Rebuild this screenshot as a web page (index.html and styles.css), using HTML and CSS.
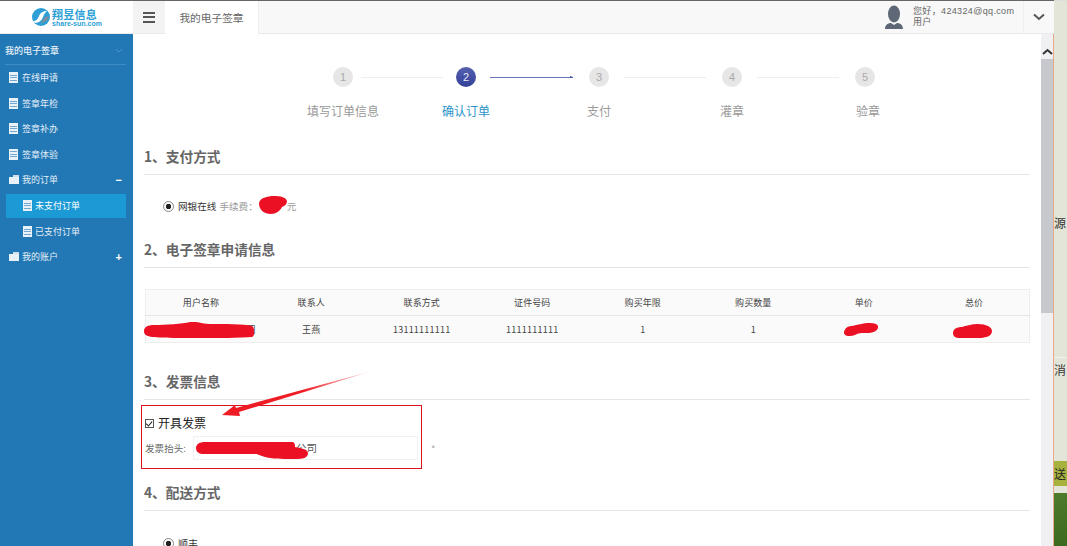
FILE: index.html
```html
<!DOCTYPE html>
<html lang="zh-CN">
<head>
<meta charset="utf-8">
<title>我的电子签章</title>
<link rel="stylesheet" href="styles.css">
</head>
<body>
<div class="screen">
  <div class="window">
    <header class="topbar">
      <div class="logo">
        <svg class="logo-mark" width="20" height="18" viewBox="0 0 20 18"><circle cx="10" cy="9" r="9" fill="#2c9fd6"/><path d="M2 13c3 0 5-2 6-5s4-5 8-5c-2 2-3 3-4 6s-4 6-8 6z" fill="#fff"/><path d="M9 15c2-1 3-3 4-5 1-1 3-2 5-2-1 4-4 7-9 7z" fill="#7d8f9c"/></svg>
        <div class="logo-text"><span class="logo-name">翔昱信息</span><span class="logo-url">share-sun.com</span></div>
      </div>
      <div class="burger"><i></i><i></i><i></i></div>
      <div class="tab">我的电子签章</div>
      <div class="user">
        <svg width="20" height="24" viewBox="0 0 20 24"><ellipse cx="10" cy="9" rx="6" ry="8.500" fill="#5d6776"/><path d="M1 24c0-4 3-6 6-6l3 2 3-2c3 0 6 2 6 6z" fill="#5d6776"/></svg>
        <div class="user-text"><span>您好，424324@qq.com</span><span>用户</span></div>
      </div>
      <div class="user-toggle"><svg width="12" height="8" viewBox="0 0 12 8"><path d="M1 1.500l5 4.500 5-4.500" fill="none" stroke="#555" stroke-width="2"/></svg></div>
    </header>
    <div class="body">
      <nav class="sidebar">
        <div class="side-title"><span>我的电子签章</span><svg width="8" height="5" viewBox="0 0 8 5"><path d="M1 1l3 3 3-3" fill="none" stroke="#4c95c9" stroke-width="1"/></svg></div>
        <a class="nav-item"><span class="ic-doc"></span>在线申请</a>
        <a class="nav-item"><span class="ic-doc"></span>签章年检</a>
        <a class="nav-item"><span class="ic-doc"></span>签章补办</a>
        <a class="nav-item"><span class="ic-doc"></span>签章体验</a>
        <a class="nav-item"><span class="ic-folder"></span>我的订单<b class="sign">−</b></a>
        <a class="nav-sub active"><span class="ic-doc"></span>未支付订单</a>
        <a class="nav-sub"><span class="ic-doc"></span>已支付订单</a>
        <a class="nav-item"><span class="ic-folder"></span>我的账户<b class="sign">+</b></a>
      </nav>
      <main class="main">
        <ol class="steps">
          <li class="step"><div class="track"><span class="dot">1</span><span class="conn"></span></div><span class="step-label">填写订单信息</span></li>
          <li class="step current"><div class="track"><span class="dot">2</span><span class="conn"></span></div><span class="step-label">确认订单</span></li>
          <li class="step"><div class="track"><span class="dot">3</span><span class="conn"></span></div><span class="step-label">支付</span></li>
          <li class="step"><div class="track"><span class="dot">4</span><span class="conn"></span></div><span class="step-label">灌章</span></li>
          <li class="step"><div class="track"><span class="dot">5</span></div><span class="step-label">验章</span></li>
        </ol>

        <h2 class="section first">1、支付方式</h2>
        <div class="pay"><span class="radio"></span><span class="pay-name">网银在线</span><span class="pay-fee">手续费：</span><span class="fee-gap"><svg class="scr scr-fee" viewBox="0 0 28 18"><path d="M0 7C1 2 8 0 15 0c6 0 12 1 13 5 0 3-2 5-5 6-2 4-6 7-11 7C5 18 0 14 0 7z" fill="#ec1024"/></svg></span><span class="pay-unit">元</span></div>

        <h2 class="section s2">2、电子签章申请信息</h2>
        <table class="order">
          <thead><tr><th>用户名称</th><th>联系人</th><th>联系方式</th><th>证件号码</th><th>购买年限</th><th>购买数量</th><th>单价</th><th>总价</th></tr></thead>
          <tbody><tr><td class="tail">司<svg class="scr scr-name" viewBox="0 0 110 16"><path d="M0 9c0-4 4-6 10-6 12 0 28-1 36-3 7-1 12 2 20 2 14 0 34 0 42 2 3 2 3 10 0 11-12 1-34 1-55 1C32 16 8 16 4 14 1 13 0 12 0 9z" fill="#ec1024"/></svg></td><td>王燕</td><td>13111111111</td><td>1111111111</td><td>1</td><td>1</td><td><svg class="scr scr-price" viewBox="0 0 34 13"><path d="M0 9c1-4 4-6 8-6 6-1 10-3 18-3 6 0 9 2 8 5-1 3-5 5-12 5-5 0-7 0-11 2-5 2-12 1-11-3z" fill="#ec1024"/></svg></td><td><svg class="scr scr-total" viewBox="0 0 39 14"><path d="M0 9c0-4 4-6 9-6 4-1 9-3 16-3 8 0 14 3 14 7 0 5-6 7-13 7H7C3 14 0 13 0 9z" fill="#ec1024"/></svg></td></tr></tbody>
        </table>

        <h2 class="section s3">3、发票信息</h2>
        <div class="invoice">
          <label class="check"><span class="box"></span>开具发票</label>
          <div class="inv-row"><span class="inv-label">发票抬头:</span><div class="inv-input"><span>公司</span><svg class="scr scr-inv" viewBox="0 0 112 17"><path d="M0 6c0-4 4-6 9-6l87 0c2 0 3 1 3 5 5 1 13 2 13 6 0 5-5 6-13 6-13 0-26 0-33-3-3-1-4-2-8-2H8C3 12 0 10 0 6z" fill="#ec1024"/></svg></div><span class="star">*</span></div>
          <svg class="arrow" viewBox="0 0 154 50"><defs><linearGradient id="fade" x1="0" y1="1" x2="1" y2="0"><stop offset="0.55" stop-color="#ee1c25"/><stop offset="1" stop-color="#ee1c25" stop-opacity=".1"/></linearGradient></defs><path d="M3 46L16 36l1 3L153 2 20 43l1 4z" fill="url(#fade)"/></svg>
        </div>

        <h2 class="section s4">4、配送方式</h2>
        <div class="ship"><span class="radio"></span><span class="ship-name">顺丰</span></div>
      </main>
      <div class="scrollbar">
        <svg class="sb-up" width="11" height="7" viewBox="0 0 11 7"><path d="M1 6l4.500-4 4.500 4" fill="none" stroke="#333" stroke-width="2"/></svg>
        <div class="sb-thumb"></div>
      </div>
    </div>
  </div>
  <aside class="strip">
    <span class="strip-t t1">源</span>
    <span class="strip-t t2">消</span>
    <span class="strip-t t3">送</span>
    <div class="strip-green"></div>
  </aside>
</div>
</body>
</html>
```
FILE: styles.css
```css
* { box-sizing: border-box; }
html, body { margin: 0; height: 100%; overflow: hidden; }
body { font-family: "Noto Sans CJK SC", "Liberation Sans", sans-serif; color: #444; background: #fff; }
.screen { display: flex; width: 1067px; height: 546px; overflow: hidden; }
.window { width: 1054px; flex: none; display: flex; flex-direction: column; border-top: 1px solid #666; }

.topbar { height: 33px; flex: none; display: flex; align-items: stretch; background: #f8f8f8; border-bottom: 1px solid #e9e9e9; }
.logo { width: 133px; flex: none; display: flex; align-items: center; justify-content: center; gap: 1px; background: #fff; }
.logo-text { display: flex; flex-direction: column; line-height: 1; }
.logo-name { font-size: 11px; font-weight: 700; color: #2c9fd6; letter-spacing: .2px; line-height: 12px; }
.logo-url { font-family: "Liberation Sans", sans-serif; font-size: 7px; font-weight: 700; color: #2c9fd6; line-height: 7px; }
.burger { width: 32px; flex: none; display: flex; flex-direction: column; justify-content: center; align-items: center; gap: 2.500px; background: #f3f3f3; }
.burger i { display: block; width: 12px; height: 2px; background: #555; }
.tab { width: 94px; flex: none; display: flex; align-items: center; justify-content: center; background: #fff; font-size: 10.700px; color: #666; border-right: 1px solid #eee; margin-bottom: -1px; }
.user { margin-left: auto; display: flex; align-items: center; gap: 9px; padding-right: 8px; }
.user-text { display: flex; flex-direction: column; font-family: "Liberation Sans", "Noto Sans CJK SC", sans-serif; font-size: 9px; line-height: 11px; color: #666; width: 102px; letter-spacing: .35px; }
.user-toggle { width: 31px; flex: none; display: flex; align-items: center; justify-content: center; border-left: 1px solid #eee; }

.body { flex: 1; display: flex; min-height: 0; }
.sidebar { width: 133px; flex: none; background: #2277b5; color: #e4eff7; padding-left: 5px; padding-right: 7px; font-size: 9px; }
.side-title { height: 31px; display: flex; align-items: center; justify-content: space-between; padding: 2px 3px 0 0; border-bottom: 1px solid #3e8cc4; font-weight: 500; }
.nav-item, .nav-sub { display: flex; align-items: center; height: 25.500px; }
.nav-item { padding-left: 4px; }
.nav-sub { margin-left: 1px; padding-left: 17px; }
.nav-sub.active { background: #1c9ad6; height: 24px; margin-top: 1px; margin-bottom: 1px; color: #fff; }
.ic-doc { width: 9px; height: 11px; background: repeating-linear-gradient(#eaf2f8 0 1.500px, #6fa8d2 1.500px 2.500px); border: 1px solid #eaf2f8; margin-right: 4px; flex: none; }
.nav-sub .ic-doc { margin-right: 3px; }
.ic-folder { position: relative; width: 10px; height: 7px; margin-top: 2px; background: #e8f1f8; margin-right: 3px; flex: none; }
.ic-folder::before { content: ""; position: absolute; right: 0; top: -2px; width: 6px; height: 2px; background: #cfe0ee; }
.sign { margin-left: auto; margin-right: 4px; color: #fff; font-size: 11px; font-family: "Liberation Sans", sans-serif; }

.main { flex: 1; min-width: 0; background: #fff; padding: 0 11px; overflow: hidden; }
.steps { list-style: none; margin: 33px 0 0 132.500px; padding: 0; display: flex; }
.step { width: 133px; min-width: 0; flex: none; display: flex; flex-direction: column; }
.step:first-child { margin-right: -10px; }
.track { display: flex; align-items: center; height: 20px; margin-left: 56.500px; width: 140px; }
.dot { width: 20px; height: 20px; flex: none; border-radius: 50%; background: #e6e6e6; color: #aaa; font-family: "Liberation Sans", sans-serif; font-size: 11px; display: flex; align-items: center; justify-content: center; }
.conn { width: 82px; flex: none; margin-left: 15px; height: 1px; background: #eeeeee; }
.step:first-child .conn { margin-left: 8px; }
.step-label { text-align: center; font-size: 12px; line-height: 16px; margin-top: 16px; color: #999; width: 133px; }
.step:last-child .step-label { padding-left: 6px; }
.current .dot { background: linear-gradient(#5560ad, #33419a); color: #e6e9f7; }
.current .conn { background: #6873b5; margin-left: 14px; position: relative; width: 83px; }
.current .conn::after { content: ""; position: absolute; right: 0; top: -1px; border-left: 3px solid #3b4a9d; border-top: 1.500px solid transparent; border-bottom: 1.500px solid transparent; }
.current .step-label { color: #2b93c8; }

.section { margin: 0; font-size: 13.700px; font-weight: 700; line-height: 18px; height: 28px; color: #666; border-bottom: 1px solid #e5e5e5; }
.first { margin-top: 28px; }
.pay { display: flex; align-items: center; margin: 24px 0 0 19px; height: 14px; font-size: 9.600px; }
.radio { width: 11px; height: 11px; border-radius: 50%; border: 1px solid #888; background: radial-gradient(circle, #222 0 2.500px, #fff 3px); margin-right: 4px; flex: none; }
.pay-name { color: #333; margin-right: 3px; }
.pay-fee, .pay-unit { color: #999; }
.fee-gap { position: relative; width: 29px; height: 14px; flex: none; }
.scr { position: absolute; display: block; }
.scr-fee { width: 28px; height: 18px; left: 1px; top: -3px; }
.s2 { margin-top: 27px; }

.order { width: 885px; margin: 21px 0 0 1px; border-collapse: collapse; table-layout: fixed; font-size: 9px; letter-spacing: .1px; background: #fafafa; border: 1px solid #eee; }
.order th, .order td { font-weight: 400; text-align: center; padding: 0; color: #444; border: 0; position: relative; }
.order th { height: 26px; border-bottom: 1px solid #e6e6e6; }
.order td { height: 27px; letter-spacing: .25px; }
.order .tail { text-align: right; }
.scr-name { width: 110px; height: 16px; left: -2px; top: 6px; }
.scr-price { width: 34px; height: 13px; left: 35px; top: 7px; }
.scr-total { width: 39px; height: 14px; left: 34px; top: 8px; }

.s3 { margin-top: 29px; }
.invoice { position: relative; width: 281px; height: 64px; margin: 5px 0 0 -3px; border: 1px solid #d9141f; padding: 9px 3px 0; }
.check { display: flex; align-items: center; font-size: 12px; line-height: 16px; color: #222; }
.box { width: 9px; height: 9px; border: 1px solid #555; margin-right: 4px; position: relative; flex: none; }
.box::after { content: ""; position: absolute; left: 1px; top: 0; width: 3px; height: 5px; border: solid #222; border-width: 0 1.500px 1.500px 0; transform: rotate(40deg); }
.inv-row { display: flex; align-items: center; margin-top: 5px; font-size: 9.600px; color: #666; }
.inv-label { width: 48px; flex: none; }
.inv-input { position: relative; width: 225px; height: 24px; border: 1px solid #eef0f4; font-size: 10.500px; color: #555; line-height: 22px; padding-left: 102px; flex: none; }
.scr-inv { width: 112px; height: 17px; left: 2px; top: 5px; }
.star { position: absolute; left: 289px; top: 36px; color: #aaa; }
.arrow { position: absolute; left: 77px; top: -37px; width: 154px; height: 50px; overflow: visible; }
.s4 { margin-top: 14px; }
.ship { display: flex; align-items: center; margin: 25px 0 0 19px; font-size: 10px; color: #333; }

.scrollbar { width: 13px; flex: none; background: #f0f0f3; display: flex; flex-direction: column; align-items: center; border-right: 1px solid #e7a98a; }
.sb-up { margin-top: 14px; flex: none; }
.sb-thumb { width: 12px; margin-top: 4px; margin-right: 1px; height: 254px; background: #c6c8cd; }

.strip { width: 13px; flex: none; background: #e2e5d8; border-top: 1px solid #ddd; display: flex; flex-direction: column; overflow: hidden; font-size: 12px; line-height: 16px; color: #333; }
.strip-t { display: block; white-space: nowrap; }
.t1 { margin-top: 214px; }
.t2 { margin-top: 126px; border-top: 1px solid #f0f0f0; padding-top: 4px; }
.t3 { margin-top: 83px; background: #a6b23d; padding: 4.500px 0; color: #222; }
.strip-green { flex: 1; margin-top: 7px; background: linear-gradient(#4e7a2c, #3c6a1e); }
```
